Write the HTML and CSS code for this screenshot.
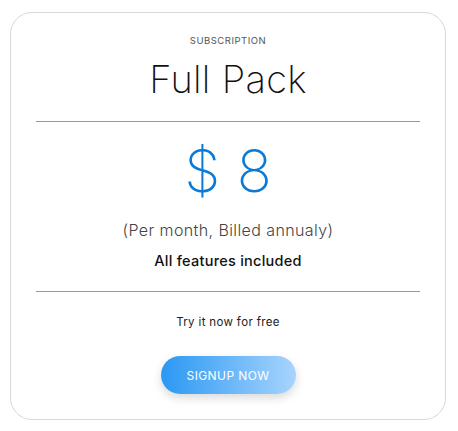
FILE: index.html
```html
<!DOCTYPE html>
<html lang="en">
<head>
    <meta charset="UTF-8">
    <meta name="viewport" content="width=device-width, initial-scale=1.0">
    <title>Full Pack</title>
    <link rel="stylesheet" href="styles.css">
</head>
<body>
    <div class="card">
        <div class="label">SUBSCRIPTION</div>
        <h1 class="title">Full Pack</h1>
        <hr class="rule">
        <div class="price">$ 8</div>
        <div class="period">(Per month, Billed annualy)</div>
        <div class="features">All features included</div>
        <hr class="rule">
        <div class="trial">Try it now for free</div>
        <button class="signup">SIGNUP NOW</button>
    </div>
</body>
</html>
```

FILE: styles.css
```css
body { margin: 0; padding: 12px 12px 0 10px; font-family: Inter, "Noto Sans", sans-serif; background: #fff; }
.card { width: 436px; height: 408px; box-sizing: border-box; border: 1px solid #d9d9d9; border-radius: 22px; padding: 22px 25px 0; text-align: center; }
.label { font-size: 9.5px; color: #555; letter-spacing: 0.5px; line-height: 12px; }
.title { margin: 10px 0 0; font-size: 38px; font-weight: 200; color: #111; line-height: 44px; letter-spacing: 0.3px; }
.rule { margin: 20px 0 0; border: 0; border-top: 1px solid #999; }
.price { margin-top: 14px; font-size: 58px; font-weight: 200; color: #0a7ad8; line-height: 70px; }
.period { margin-top: 14px; font-size: 16px; font-weight: 300; color: #444; line-height: 20px; letter-spacing: 0.4px; }
.features { margin-top: 12px; font-size: 14.5px; font-weight: 500; color: #111; line-height: 18px; letter-spacing: 0.25px; }
.features + .rule { margin-top: 21px; }
.rule + .trial { margin-top: 23px; }
.trial { font-size: 11.5px; color: #222; line-height: 14px; letter-spacing: 0.35px; }
.signup { margin-top: 27px; width: 135px; height: 38px; border: 0; border-radius: 19px; background: linear-gradient(90deg, #2a98f3, #a8d4fd); color: #fff; font-family: inherit; font-size: 12px; letter-spacing: 0.4px; box-shadow: 0 4px 10px rgba(0,0,0,0.15); }
```
